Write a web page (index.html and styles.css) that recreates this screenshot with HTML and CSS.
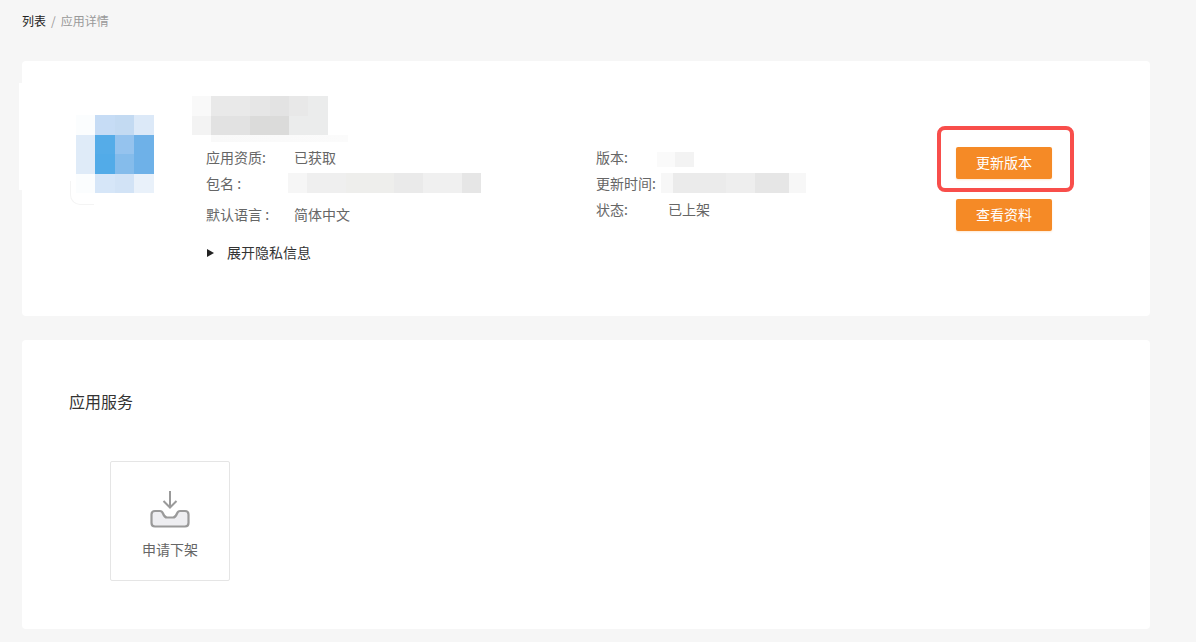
FILE: index.html
```html
<!DOCTYPE html>
<html lang="zh-CN">
<head>
<meta charset="utf-8">
<title>应用详情</title>
<link rel="stylesheet" href="styles.css">
</head>
<body>
<nav class="crumbs"><span class="crumb-link">列表</span><span class="crumb-sep">/</span><span class="crumb-current">应用详情</span></nav>

<section class="card app-card">
  <div class="spill"></div>
  <div class="logo">
    <div class="logo-row lr1"></div>
    <div class="logo-row lr2"></div>
    <div class="logo-row lr3"></div>
    <div class="logo-row lr4"></div>
    <div class="logo-corner"></div>
  </div>
  <div class="info">
    <div class="title-blur">
      <div class="tb tb1"></div>
      <div class="tb tb2"></div>
      <div class="tb tb3"></div>
    </div>
    <div class="columns">
      <div class="col col-a">
        <div class="row"><span class="label">应用资质:</span><span>已获取</span></div>
        <div class="row"><span class="label">包名 :</span><span class="blur pkg"></span></div>
        <div class="row row-lang"><span class="label">默认语言 :</span><span>简体中文</span></div>
        <div class="expand"><span class="caret"></span><span>展开隐私信息</span></div>
      </div>
      <div class="col col-b">
        <div class="row"><span class="label">版本:</span><span class="blur ver"></span></div>
        <div class="row"><span class="label">更新时间:</span><span class="blur time"></span></div>
        <div class="row"><span class="label">状态:</span><span>已上架</span></div>
      </div>
    </div>
  </div>
  <div class="actions">
    <div class="highlight"></div>
    <button class="btn">更新版本</button>
    <button class="btn">查看资料</button>
  </div>
</section>

<section class="card service-card">
  <h2 class="service-title">应用服务</h2>
  <div class="tile">
    <svg class="tile-icon" width="40" height="40" viewBox="0 0 40 40" fill="none" stroke="#9a9a9a" stroke-width="2">
      <path d="M5 21H10Q12 21 13 23.5Q14.5 27.5 17 27.5H23Q25.5 27.5 27 23.5Q28 21 30 21H35Q38.5 21 38.5 24.5V33Q38.5 36.5 35 36.5H5Q1.500 36.500 1.500 33V24.500Q1.500 21 5 21Z" fill="#eeeef1" stroke-width="2.200"/>
      <path d="M20 1V18M13.500 11L20 17.500L26.500 11"/>
    </svg>
    <span class="tile-label">申请下架</span>
  </div>
</section>
</body>
</html>
```
FILE: styles.css
```css
* { box-sizing: border-box; }
html, body { height: 100%; }
body {
  margin: 0;
  padding: 0 46px 13px 22px;
  background: #f6f6f6;
  font-family: "Noto Sans CJK SC", "Liberation Sans", sans-serif;
  font-size: 14px;
  color: #666;
  overflow: hidden;
}
.crumbs {
  height: 61px;
  padding-top: 12px;
  font-size: 12px;
  line-height: 17px;
}
.crumb-link { color: #222; }
.crumb-sep { color: #999; margin: 0 5px; }
.crumb-current { color: #999; }

.card { background: #fff; border-radius: 4px; }
.app-card {
  position: relative;
  display: flex;
  height: 255px;
  margin-bottom: 24px;
}
.spill {
  position: absolute;
  left: -3px;
  top: 22px;
  width: 6px;
  height: 107px;
  background: #fff;
}
.logo {
  position: relative;
  width: 78px;
  height: 78px;
  margin: 54px 0 0 54px;
}
.logo-row { height: 25%; }
.lr1 { background: linear-gradient(90deg, #fbfdfe 25%, #c6dcf5 25% 50%, #c3daf2 50% 75%, #dce9f8 75%); }
.lr2 { background: linear-gradient(90deg, #dfebf8 25%, #55ace8 25% 50%, #95c3ee 50% 75%, #6eb1e8 75%); }
.lr3 { background: linear-gradient(90deg, #dfebf8 25%, #52abe8 25% 50%, #85bceb 50% 75%, #6eb1e8 75%); }
.lr4 { background: linear-gradient(90deg, #fbfdfe 25%, #d6e6f8 25% 50%, #d2e3f6 50% 75%, #e9f1fa 75%); }
.logo-corner {
  position: absolute;
  left: -6px;
  bottom: -12px;
  width: 24px;
  height: 24px;
  border-left: 1px solid #f4f4f4;
  border-bottom: 1px solid #f4f4f4;
  border-bottom-left-radius: 10px;
}

.info {
  width: 614px;
  margin-left: 38px;
  padding-top: 35px;
}
.title-blur { width: 156px; height: 48px; }
.tb { height: 19.500px; width: 136px; }
.tb1 { background: linear-gradient(90deg, #f9f9f9 14%, #e9e9e9 14% 43%, #e6e6e6 43% 57%, #e3e3e3 57% 71%, #e8e8e8 71% 85%, #ebecec 85%); }
.tb2 { background: linear-gradient(90deg, #f3f3f3 14%, #e2e2e2 14% 43%, #dbdbda 43% 71%, #ebecec 71%); }
.tb3 { width: 156px; height: 7px; background: linear-gradient(90deg, #fff 12%, #f9f9f9 12%, #fbfbfb); }

.columns { display: flex; padding-left: 14px; }
.col-a { width: 390px; }
.row {
  display: flex;
  align-items: center;
  height: 26px;
  line-height: 26px;
  white-space: nowrap;
}
.col-a .label { width: 88px; }
.col-b .label { width: 72px; }
.row-lang { margin-top: 5px; }
.expand {
  display: flex;
  align-items: center;
  height: 26px;
  margin-top: 12px;
  color: #333;
}
.caret {
  width: 0;
  height: 0;
  margin: 1px 13px 0 1px;
  border-left: 7px solid #222;
  border-top: 4px solid transparent;
  border-bottom: 4px solid transparent;
}
.blur { display: block; }
.pkg {
  width: 193px;
  height: 20px;
  margin-left: -6px;
  background: linear-gradient(90deg, #f6f6f6 10%, #efefef 10% 30%, #eeeeec 30% 55%, #eaeaea 55% 70%, #f0f0f0 70% 90%, #e6e6e6 90%);
}
.ver {
  width: 37px;
  height: 15px;
  margin-left: -11px;
  margin-top: 4px;
  background: linear-gradient(90deg, #fafafa 50%, #f3f3f3 50%);
}
.time {
  width: 145px;
  height: 20px;
  margin-left: -7px;
  background: linear-gradient(90deg, #f7f7f7 8%, #ebebeb 8% 45%, #eeeeee 45% 65%, #e6e6e6 65% 88%, #f7f7f7 88%);
}

.actions {
  position: relative;
  display: flex;
  flex-direction: column;
  gap: 20px;
  margin-left: 150px;
  padding-top: 86px;
}
.btn {
  width: 96px;
  height: 32px;
  padding: 0 0 2px;
  border: 0;
  border-radius: 2px;
  background: #f58a26;
  color: #fff;
  font: inherit;
  box-shadow: 0 1px 2px rgba(246, 139, 37, .2);
}
.highlight {
  position: absolute;
  left: -19px;
  top: 65px;
  width: 137px;
  height: 66px;
  border: 4px solid #f84e4b;
  border-radius: 8px;
}

.service-card {
  height: 289px;
  padding: 48px 0 0 47px;
}
.service-title {
  margin: 0;
  font-size: 16px;
  font-weight: 400;
  line-height: 26px;
  color: #333;
}
.tile {
  display: flex;
  flex-direction: column;
  align-items: center;
  width: 120px;
  height: 120px;
  margin: 47px 0 0 41px;
  padding-top: 28px;
  border: 1px solid #e5e5e5;
  border-radius: 2px;
}
.tile-label { margin-top: 8px; line-height: 22px; }
```
